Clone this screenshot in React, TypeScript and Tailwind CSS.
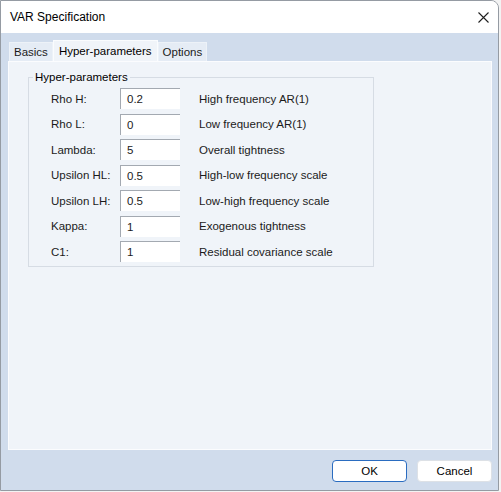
const rows = [
  { label: 'Rho H:', value: '0.2', desc: 'High frequency AR(1)' },
  { label: 'Rho L:', value: '0', desc: 'Low frequency AR(1)' },
  { label: 'Lambda:', value: '5', desc: 'Overall tightness' },
  { label: 'Upsilon HL:', value: '0.5', desc: 'High-low frequency scale' },
  { label: 'Upsilon LH:', value: '0.5', desc: 'Low-high frequency scale' },
  { label: 'Kappa:', value: '1', desc: 'Exogenous tightness' },
  { label: 'C1:', value: '1', desc: 'Residual covariance scale' },
];

const tabs = ['Basics', 'Hyper-parameters', 'Options'];

export default function App() {
  return (
    <div className="w-[501px] h-[492px] bg-[#f3f3f3] text-[11.5px] text-[#1b1b1b] font-['Liberation_Sans',Arial,sans-serif] leading-[14px]">
      <div className="w-[499px] h-[491px] border border-[#959ba3] rounded-tr-[8px] overflow-hidden flex flex-col">
        {/* title bar */}
        <div className="h-[32px] bg-white flex items-center justify-between pl-[9px] pr-[9px] shrink-0">
          <span className="text-black text-[12px]">VAR Specification</span>
          <svg width="11" height="11" viewBox="0 0 11 11">
            <path d="M0.5 0.5 L10.5 10.5 M10.5 0.5 L0.5 10.5" stroke="#1f1f1f" strokeWidth="1.1" />
          </svg>
        </div>

        {/* body */}
        <div className="flex-1 bg-[#d0dcec] flex flex-col pl-[7px] pt-[7px]">
          <div className="flex items-end h-[21px] pl-[1px]">
            {tabs.map((t) =>
              t === 'Hyper-parameters' ? (
                <div
                  key={t}
                  className="h-[21px] px-[5px] flex items-center bg-[#f0f4f9] border border-b-0 border-[#fafcfe] text-black"
                >
                  {t}
                </div>
              ) : (
                <div
                  key={t}
                  className="h-[19px] px-[4px] flex items-center bg-[#e5ecf5] border border-b-0 border-[#edf2f8]"
                >
                  {t}
                </div>
              )
            )}
          </div>

          {/* tab panel */}
          <div className="w-[484px] h-[389px] bg-[#f0f4f9] border border-[#fbfcfe] shrink-0">
            <fieldset className="ml-[19px] mt-[8px] w-[346px] h-[197px] border border-[#d6dce4] pt-[4px]">
              <legend className="ml-[4px] px-[2px] leading-[14px] text-black">Hyper-parameters</legend>
              <div className="flex flex-col gap-[4.5px]">
                {rows.map((r) => (
                  <div key={r.label} className="flex items-center h-[21px] pl-[22px]">
                    <span className="w-[69px]">{r.label}</span>
                    <div className="w-[60px] h-[21px] bg-white border-t border-l border-[#a3a9b1] flex items-center pl-[6px]">
                      {r.value}
                    </div>
                    <span className="ml-[19px]">{r.desc}</span>
                  </div>
                ))}
              </div>
            </fieldset>
          </div>

          {/* buttons */}
          <div className="flex justify-end gap-[10px] mt-[10px] pr-[6px]">
            <button className="w-[75px] h-[22px] bg-white border border-[#2a6cc0] rounded-[4px] text-[11.5px] text-black">
              OK
            </button>
            <button className="w-[75px] h-[22px] bg-white border border-[#dde1e6] rounded-[4px] text-[11.5px] text-black">
              Cancel
            </button>
          </div>
        </div>
      </div>
    </div>
  );
}
